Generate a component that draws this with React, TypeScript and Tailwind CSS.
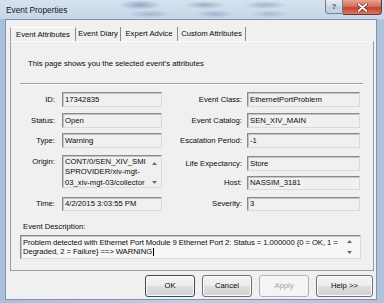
import type { ReactNode } from 'react';

// read-only sunken edit box used for every attribute value
function Field({ children, className = '' }: { children?: ReactNode; className?: string }) {
    return (
        <div
            className={`border border-t-[#8a8a8a] border-l-[#8a8a8a] border-r-[#dadada] border-b-[#dadada] bg-[#f0f0f0] shadow-[inset_1px_1px_0_#c4c4c4] pl-[2px] whitespace-nowrap overflow-hidden ${className}`}
        >
            {children}
        </div>
    );
}

function Row({ label, value, labelW, fieldW, className = '' }: { label: string; value: string; labelW: string; fieldW: string; className?: string }) {
    return (
        <div className={`flex h-[15px] ${className}`}>
            <div className={`${labelW} text-right leading-[15px] whitespace-nowrap`}>{label}</div>
            <Field className={`${fieldW} leading-[13px]`}>{value}</Field>
        </div>
    );
}

// the tiny arrows of a classic multi-line edit's scrollbar
function ScrollArrows({ gap }: { gap: string }) {
    return (
        <div className={`flex flex-col items-center ${gap}`}>
            <svg width="5" height="3" viewBox="0 0 5 3">
                <path d="M0 3 L2.5 0 L5 3 Z" fill="#6a6a6a" />
            </svg>
            <svg width="5" height="3" viewBox="0 0 5 3">
                <path d="M0 0 L5 0 L2.5 3 Z" fill="#6a6a6a" />
            </svg>
        </div>
    );
}

function Button({ children, kind = 'normal' }: { children: ReactNode; kind?: 'normal' | 'default' | 'disabled' }) {
    if (kind === 'disabled') {
        return (
            <div className="w-[50px] h-[22px] rounded-[3px] border border-[#adb2b5] bg-[#f4f4f4] text-[#a3a3a3] flex items-center justify-center">
                {children}
            </div>
        );
    }
    return (
        <div
            className={`w-[50px] h-[22px] rounded-[3px] border ${kind === 'default' ? 'border-[#3d4a57]' : 'border-[#707070]'} bg-[linear-gradient(180deg,#f4f4f4_0%,#ececec_48%,#dfdfdf_52%,#d1d1d1_100%)] shadow-[inset_0_0_0_1px_#fbfbfb] flex items-center justify-center`}
        >
            {children}
        </div>
    );
}

export default function App() {
    return (
        <div className="w-[384px] h-[303px] overflow-hidden flex flex-col bg-[linear-gradient(90deg,#a9bfd9_0%,#bfd0e4_50%,#aec3db_100%)] font-['Liberation_Sans',Arial,sans-serif] text-[7.7px] text-[#0a0a0a]">
            {/* title bar, aero glass with blurred windows behind */}
            <div className="h-[19px] shrink-0 flex items-start pl-[6px] pr-[2px] bg-[radial-gradient(ellipse_22px_5px_at_140px_5px,rgba(70,100,145,0.45),transparent),radial-gradient(ellipse_20px_4px_at_205px_5px,rgba(70,100,145,0.4),transparent),radial-gradient(ellipse_22px_4px_at_265px_5px,rgba(70,100,145,0.35),transparent),radial-gradient(ellipse_22px_4px_at_150px_14px,rgba(70,100,145,0.3),transparent),radial-gradient(ellipse_20px_4px_at_215px_14px,rgba(70,100,145,0.3),transparent),radial-gradient(ellipse_20px_4px_at_270px_14px,rgba(70,100,145,0.25),transparent),linear-gradient(180deg,#d6e2ef_0%,#c6d6e8_100%)]">
                <div className="pt-[4px] text-[8.3px] leading-[12px] text-[#151515]">Event Properties</div>
                <div className="ml-auto flex">
                    <div className="w-[18px] h-[14px] rounded-bl-[4px] border border-t-0 border-[#6f8197] bg-[linear-gradient(180deg,#e6edf5_0%,#cfdae7_50%,#bccbdc_51%,#cad7e5_100%)] flex items-center justify-center text-[8px] font-bold text-[#4a586a]">
                        ?
                    </div>
                    <div className="w-[39px] h-[15px] rounded-br-[4px] border border-t-0 border-l-0 border-[#7a3026] bg-[linear-gradient(180deg,#e8a493_0%,#d5705c_45%,#c2412c_55%,#d67a62_100%)] flex items-center justify-center">
                        <svg width="11" height="9" viewBox="0 0 11 9">
                            <path d="M1.5 1 L9.5 8 M9.5 1 L1.5 8" stroke="#5a1c14" strokeWidth="3" strokeLinecap="round" />
                            <path d="M1.5 1 L9.5 8 M9.5 1 L1.5 8" stroke="#ffffff" strokeWidth="1.8" strokeLinecap="round" />
                        </svg>
                    </div>
                </div>
            </div>

            {/* client area */}
            <div className="flex-1 ml-[5px] mr-[7px] mb-[3px] border border-[#8093ab] bg-[#f0f0f0] flex flex-col">
                {/* tabs */}
                <div className="mt-[7px] pl-[4px] flex h-[14px] items-stretch">
                    <div className="w-[66px] border-l border-t border-r border-l-[#9c9c9c] border-t-[#ffffff] border-r-[#8a8a8a] bg-[#f0f0f0] flex items-center justify-center whitespace-nowrap">
                        Event Attributes
                    </div>
                    <div className="w-[45px] border-r border-[#8a8a8a] flex items-center justify-center whitespace-nowrap">Event Diary</div>
                    <div className="w-[57px] border-r border-[#8a8a8a] flex items-center justify-center whitespace-nowrap">Expert Advice</div>
                    <div className="w-[68px] border-r border-[#8a8a8a] flex items-center justify-center whitespace-nowrap">Custom Attributes</div>
                </div>

                {/* tab page */}
                <div className="ml-[4px] mr-[2px] h-[230px] border border-[#9c9c9c] border-t-[#fafafa] flex flex-col px-[9px] pr-[10px]">
                    <div className="mt-[17px] pl-[8px] leading-[10px]">This page shows you the selected event's attributes</div>
                    <div className="mt-[14px] h-[2px] border-t border-b border-t-[#a0a0a0] border-b-white" />

                    <div className="mt-[7px] flex">
                        {/* left column */}
                        <div className="flex flex-col">
                            <Row label="ID:" value="17342835" labelW="w-[35px]" fieldW="ml-[7px] w-[100px]" />
                            <Row label="Status:" value="Open" labelW="w-[35px]" fieldW="ml-[7px] w-[100px]" className="mt-[6px]" />
                            <Row label="Type:" value="Warning" labelW="w-[35px]" fieldW="ml-[7px] w-[100px]" className="mt-[5px]" />
                            <div className="mt-[7px] flex h-[33px]">
                                <div className="w-[35px] text-right pt-[2px] leading-[10px]">Origin:</div>
                                <Field className="ml-[7px] w-[100px] flex">
                                    <div className="pt-[1px] leading-[10.3px]">
                                        <div>CONT/0/SEN_XIV_SMI</div>
                                        <div>SPROVIDER/xiv-mgt-</div>
                                        <div>03_xiv-mgt-03/collector</div>
                                    </div>
                                    <div className="ml-auto pr-[4px] pt-[6px]">
                                        <ScrollArrows gap="gap-[16px]" />
                                    </div>
                                </Field>
                            </div>
                            <div className="mt-[9px] flex h-[14px]">
                                <div className="w-[35px] text-right leading-[14px]">Time:</div>
                                <Field className="ml-[7px] w-[100px] leading-[12px]">4/2/2015 3:03:55 PM</Field>
                            </div>
                        </div>

                        {/* right column */}
                        <div className="ml-auto pr-[3px] flex flex-col">
                            <Row label="Event Class:" value="EthernetPortProblem" labelW="w-[67px]" fieldW="ml-[5px] w-[113px]" />
                            <Row label="Event Catalog:" value="SEN_XIV_MAIN" labelW="w-[67px]" fieldW="ml-[5px] w-[113px]" className="mt-[6px]" />
                            <Row label="Escalation Period:" value="-1" labelW="w-[67px]" fieldW="ml-[5px] w-[113px]" className="mt-[5px]" />
                            <Row label="Life Expectancy:" value="Store" labelW="w-[67px]" fieldW="ml-[5px] w-[113px]" className="mt-[8px]" />
                            <div className="mt-[5px] flex h-[14px]">
                                <div className="w-[67px] text-right leading-[14px]">Host:</div>
                                <Field className="ml-[5px] w-[113px] leading-[12px]">NASSIM_3181</Field>
                            </div>
                            <div className="mt-[7px] flex h-[14px]">
                                <div className="w-[67px] text-right leading-[14px]">Severity:</div>
                                <Field className="ml-[5px] w-[113px] leading-[12px]">3</Field>
                            </div>
                        </div>
                    </div>

                    <div className="mt-[11px] pl-[3px] leading-[10px]">Event Description:</div>
                    <div className="mt-[3px] mr-[2px] h-[24px] flex border border-t-[#8a8a8a] border-l-[#8a8a8a] border-r-[#dadada] border-b-[#dadada] bg-[#f7f7f7] shadow-[inset_1px_1px_0_#c4c4c4]">
                        <div className="pl-[2px] pt-[2px] leading-[9px] whitespace-nowrap tracking-[-0.08px]">
                            <div>Problem detected with Ethernet Port Module 9 Ethernet Port 2: Status = 1.000000 {'{'}0 = OK, 1 =</div>
                            <div className="flex items-center">
                                Degraded, 2 = Failure{'}'} ==&gt; WARNING
                                <span className="ml-[1px] w-[1px] h-[8px] bg-black" />
                            </div>
                        </div>
                        <div className="ml-auto pr-[8px] pt-[4px]">
                            <ScrollArrows gap="gap-[8px]" />
                        </div>
                    </div>
                </div>

                {/* dialog buttons */}
                <div className="mt-[4px] pr-[3px] flex justify-end gap-[7px]">
                    <Button kind="default">OK</Button>
                    <Button>Cancel</Button>
                    <Button kind="disabled">Apply</Button>
                    <div className="w-[57px] h-[22px] rounded-[3px] border border-[#707070] bg-[linear-gradient(180deg,#f4f4f4_0%,#ececec_48%,#dfdfdf_52%,#d1d1d1_100%)] shadow-[inset_0_0_0_1px_#fbfbfb] flex items-center justify-center">
                        Help &gt;&gt;
                    </div>
                </div>
            </div>
        </div>
    );
}
